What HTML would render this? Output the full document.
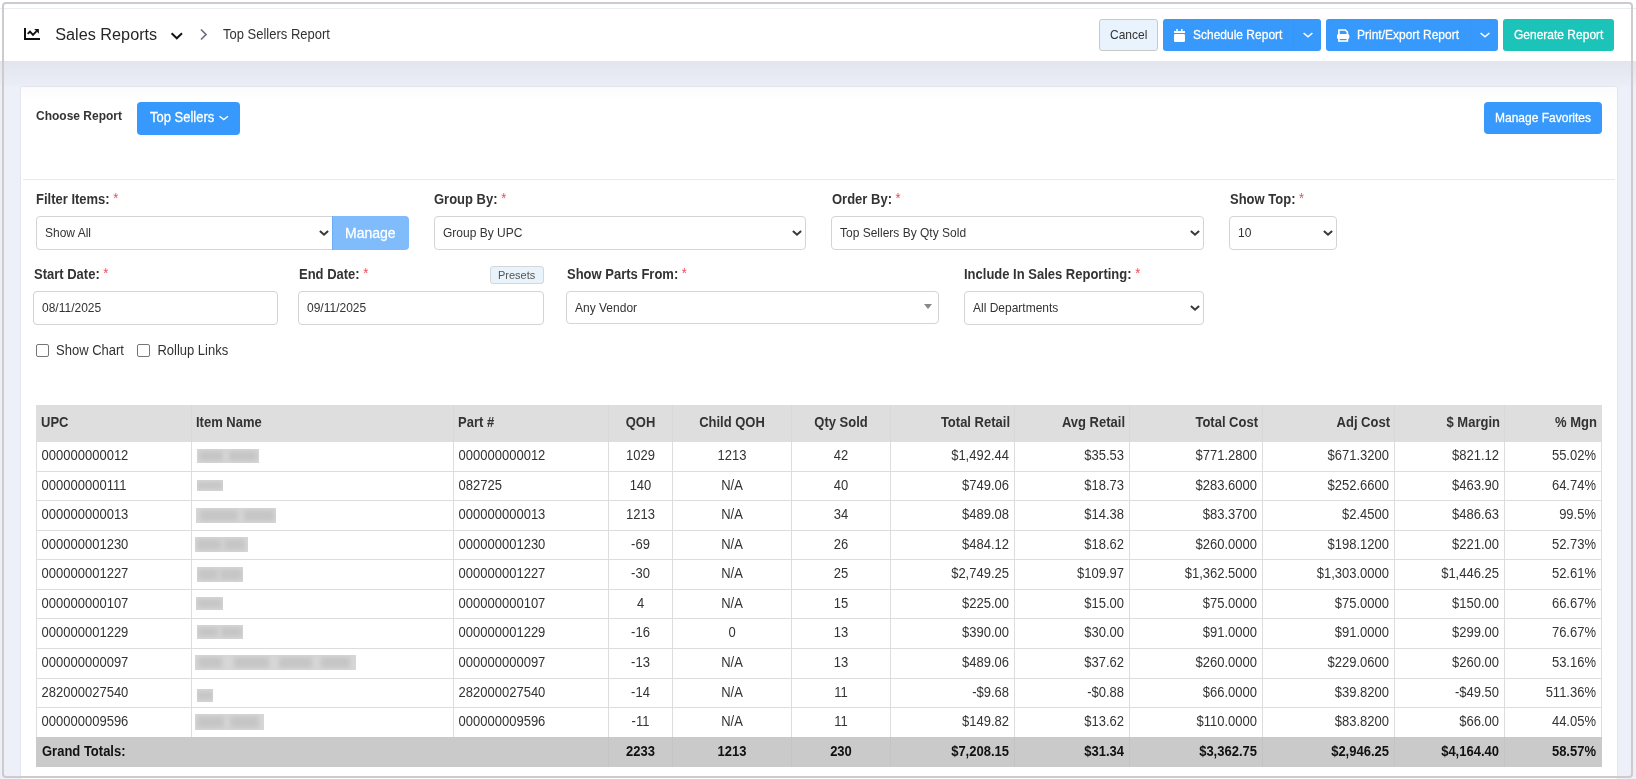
<!DOCTYPE html>
<html><head><meta charset="utf-8">
<style>
*{box-sizing:border-box;margin:0;padding:0}
html,body{width:1636px;height:779px;overflow:hidden}
body{position:relative;background:#EDF0F8;font-family:"Liberation Sans",sans-serif;color:#333}
.r,.t,svg{position:absolute}
.t{white-space:nowrap;line-height:1;transform:scaleY(1.08);transform-origin:0 84.65%}
#root{position:absolute;left:0;top:0;width:1636px;height:779px;overflow:hidden;will-change:transform}
</style></head><body>

<div id="root">
<div class="r" style="left:0px;top:0px;width:1636px;height:61px;background:#fff;"></div>
<div class="r" style="left:0px;top:8px;width:1636px;height:1px;background:#e9eef3;"></div>
<div class="r" style="left:0px;top:61px;width:1636px;height:25px;background:linear-gradient(#e3e5ee,#ebeef6);"></div>
<svg style="left:21px;top:25px" width="22" height="18" viewBox="0 0 22 18">
<rect x="3" y="3" width="2" height="12" fill="#111"/><rect x="3" y="13" width="16" height="2" fill="#111"/>
<path d="M6.7 8.9 L9 6.6 L12 9.8 L15.6 6.2" fill="none" stroke="#111" stroke-width="1.9" stroke-linejoin="miter"/>
<path d="M13.2 4.1 H17.9 V8.7 Z" fill="#111"/>
</svg>
<div class="t" style="left:55.2px;top:26px;font-size:16.25px;color:#262626;transform:scaleY(1.05);">Sales Reports</div>
<svg style="left:170px;top:31px" width="14" height="10" viewBox="0 0 14 10"><path d="M1.6 2.3 L6.8 7.3 L12 2.3" fill="none" stroke="#151515" stroke-width="2"/></svg>
<svg style="left:198px;top:27px" width="12" height="15" viewBox="0 0 12 15"><path d="M3 2.5 L8 7.5 L3 12.5" fill="none" stroke="#6c6e80" stroke-width="1.7"/></svg>
<div class="t" style="left:223px;top:28px;font-size:13px;color:#333;">Top Sellers Report</div>
<div class="r" style="left:1099px;top:19px;width:59px;height:32px;background:#e9f3fd;border:1px solid #c9c9c9;border-radius:3px;"></div>
<div class="t" style="left:1110px;top:29px;font-size:12px;color:#333;">Cancel</div>
<div class="r" style="left:1163px;top:19px;width:158px;height:32px;background:#3699fb;border-radius:3px;"></div>
<div class="r" style="left:1293px;top:19px;width:1px;height:32px;background:#3596f8;"></div>
<svg style="left:1173px;top:28px" width="13" height="15" viewBox="0 0 13 15">
<rect x="1" y="3" width="11" height="2" fill="#fff"/><rect x="1" y="6" width="11" height="8" rx="1.2" fill="#fff"/>
<rect x="3.2" y="1" width="1.6" height="3" fill="#fff"/><rect x="8" y="1" width="1.6" height="3" fill="#fff"/>
</svg>
<div class="t" style="left:1193px;top:29px;font-size:12px;color:#fff;-webkit-text-stroke:0.25px #fff;">Schedule Report</div>
<svg style="left:1302px;top:31px" width="12" height="8" viewBox="0 0 12 8"><path d="M1.6 2 L6 5.8 L10.4 2" fill="none" stroke="#fff" stroke-width="1.6"/></svg>
<div class="r" style="left:1326px;top:19px;width:172px;height:32px;background:#3699fb;border-radius:3px;"></div>
<div class="r" style="left:1470px;top:19px;width:1px;height:32px;background:#3596f8;"></div>
<svg style="left:1336px;top:28px" width="15" height="15" viewBox="0 0 15 15">
<path d="M2.9 6 V2 H9.3 L11.4 4.1 V6" fill="none" stroke="#fff" stroke-width="1.6"/>
<rect x="1" y="6" width="12.3" height="5" rx="1.5" fill="#fff"/>
<rect x="2.9" y="9.6" width="8.5" height="3.4" fill="none" stroke="#fff" stroke-width="1.6"/>
</svg>
<div class="t" style="left:1357px;top:29px;font-size:12px;color:#fff;-webkit-text-stroke:0.25px #fff;">Print/Export Report</div>
<svg style="left:1479px;top:31px" width="12" height="8" viewBox="0 0 12 8"><path d="M1.6 2 L6 5.8 L10.4 2" fill="none" stroke="#fff" stroke-width="1.6"/></svg>
<div class="r" style="left:1503px;top:19px;width:111px;height:32px;background:#1bc3b9;border-radius:3px;"></div>
<div class="t" style="left:1514px;top:29px;font-size:12px;color:#fff;-webkit-text-stroke:0.25px #fff;">Generate Report</div>
<div class="r" style="left:20px;top:86px;width:1598px;height:714px;background:#fff;border:1px solid #e2e5ed;border-radius:3px;"></div>
<div class="r" style="left:21px;top:87px;width:1596px;height:13px;background:linear-gradient(#fbfbfb,#fff);border-radius:3px 3px 0 0;"></div>
<div class="t" style="left:36px;top:110px;font-size:12px;color:#333;font-weight:bold;">Choose Report</div>
<div class="r" style="left:137px;top:102px;width:103px;height:33px;background:#3699fb;border-radius:4px;"></div>
<div class="t" style="left:150px;top:111px;font-size:13px;color:#fff;-webkit-text-stroke:0.25px #fff;">Top Sellers</div>
<svg style="left:218px;top:114px" width="11" height="8" viewBox="0 0 11 8"><path d="M1.5 2.2 L5.8 5.6 L10 2.2" fill="none" stroke="#fff" stroke-width="1.4"/></svg>
<div class="r" style="left:1484px;top:102px;width:118px;height:32px;background:#3699fb;border-radius:4px;"></div>
<div class="t" style="left:1495px;top:112px;font-size:12px;color:#fff;-webkit-text-stroke:0.25px #fff;">Manage Favorites</div>
<div class="r" style="left:23px;top:179px;width:1592px;height:1px;background:#e6e9ee;"></div>
<div class="t" style="left:36px;top:193px;font-size:13px;font-weight:bold;color:#333">Filter Items: <span style="color:#ef4a5c;font-weight:normal;position:relative;top:-1.5px">*</span></div>
<div class="r" style="left:36px;top:216px;width:298px;height:34px;background:#fff;border:1px solid #d4d4d4;border-radius:4px;border-radius:4px 0 0 4px;"></div>
<div class="t" style="left:45px;top:227px;font-size:12px;color:#333;">Show All</div>
<svg style="left:318px;top:227px" width="12" height="10" viewBox="0 0 12 10"><path d="M1.9 4 L6 7.7 L10.1 4" fill="none" stroke="#3a3a3a" stroke-width="2.1"/></svg>
<div class="r" style="left:332px;top:216px;width:77px;height:34px;background:#80bbfb;border-radius:0 4px 4px 0;border-left:1px solid #6cadf5;"></div>
<div class="t" style="left:345px;top:226px;font-size:14px;color:#fff;-webkit-text-stroke:0.25px #fff;">Manage</div>
<div class="t" style="left:434px;top:193px;font-size:13px;font-weight:bold;color:#333">Group By: <span style="color:#ef4a5c;font-weight:normal;position:relative;top:-1.5px">*</span></div>
<div class="r" style="left:434px;top:216px;width:372px;height:34px;background:#fff;border:1px solid #d4d4d4;border-radius:4px;"></div>
<div class="t" style="left:443px;top:227px;font-size:12px;color:#333;">Group By UPC</div>
<svg style="left:791px;top:227px" width="12" height="10" viewBox="0 0 12 10"><path d="M1.9 4 L6 7.7 L10.1 4" fill="none" stroke="#3a3a3a" stroke-width="2.1"/></svg>
<div class="t" style="left:832px;top:193px;font-size:13px;font-weight:bold;color:#333">Order By: <span style="color:#ef4a5c;font-weight:normal;position:relative;top:-1.5px">*</span></div>
<div class="r" style="left:831px;top:216px;width:373px;height:34px;background:#fff;border:1px solid #d4d4d4;border-radius:4px;"></div>
<div class="t" style="left:840px;top:227px;font-size:12px;color:#333;">Top Sellers By Qty Sold</div>
<svg style="left:1189px;top:227px" width="12" height="10" viewBox="0 0 12 10"><path d="M1.9 4 L6 7.7 L10.1 4" fill="none" stroke="#3a3a3a" stroke-width="2.1"/></svg>
<div class="t" style="left:1230px;top:193px;font-size:13px;font-weight:bold;color:#333">Show Top: <span style="color:#ef4a5c;font-weight:normal;position:relative;top:-1.5px">*</span></div>
<div class="r" style="left:1229px;top:216px;width:108px;height:34px;background:#fff;border:1px solid #d4d4d4;border-radius:4px;"></div>
<div class="t" style="left:1238px;top:227px;font-size:12px;color:#333;">10</div>
<svg style="left:1322px;top:227px" width="12" height="10" viewBox="0 0 12 10"><path d="M1.9 4 L6 7.7 L10.1 4" fill="none" stroke="#3a3a3a" stroke-width="2.1"/></svg>
<div class="t" style="left:34px;top:268px;font-size:13px;font-weight:bold;color:#333">Start Date: <span style="color:#ef4a5c;font-weight:normal;position:relative;top:-1.5px">*</span></div>
<div class="r" style="left:33px;top:291px;width:245px;height:34px;background:#fff;border:1px solid #d4d4d4;border-radius:4px;"></div>
<div class="t" style="left:42px;top:302px;font-size:12px;color:#333;">08/11/2025</div>
<div class="t" style="left:299px;top:268px;font-size:13px;font-weight:bold;color:#333">End Date: <span style="color:#ef4a5c;font-weight:normal;position:relative;top:-1.5px">*</span></div>
<div class="r" style="left:490px;top:266px;width:54px;height:18px;background:#e8f3fc;border:1px solid #d6d6d6;border-radius:3px;"></div>
<div class="t" style="left:498px;top:270px;font-size:11px;color:#555;transform:none;">Presets</div>
<div class="r" style="left:298px;top:291px;width:246px;height:34px;background:#fff;border:1px solid #d4d4d4;border-radius:4px;"></div>
<div class="t" style="left:307px;top:302px;font-size:12px;color:#333;">09/11/2025</div>
<div class="t" style="left:567px;top:268px;font-size:13px;font-weight:bold;color:#333">Show Parts From: <span style="color:#ef4a5c;font-weight:normal;position:relative;top:-1.5px">*</span></div>
<div class="r" style="left:566px;top:291px;width:373px;height:33px;background:#fff;border:1px solid #d4d4d4;border-radius:4px;"></div>
<div class="t" style="left:575px;top:302px;font-size:12px;color:#333;">Any Vendor</div>
<svg style="left:923px;top:303px" width="10" height="7" viewBox="0 0 10 7"><path d="M1 1 H9 L5 6 Z" fill="#888"/></svg>
<div class="t" style="left:964px;top:268px;font-size:13px;font-weight:bold;color:#333">Include In Sales Reporting: <span style="color:#ef4a5c;font-weight:normal;position:relative;top:-1.5px">*</span></div>
<div class="r" style="left:964px;top:291px;width:240px;height:34px;background:#fff;border:1px solid #d4d4d4;border-radius:4px;"></div>
<div class="t" style="left:973px;top:302px;font-size:12px;color:#333;">All Departments</div>
<svg style="left:1189px;top:302px" width="12" height="10" viewBox="0 0 12 10"><path d="M1.9 4 L6 7.7 L10.1 4" fill="none" stroke="#3a3a3a" stroke-width="2.1"/></svg>
<div class="r" style="left:36px;top:344px;width:13px;height:13px;background:#fff;border:1px solid #767676;border-radius:2px;"></div>
<div class="t" style="left:56px;top:344px;font-size:13px;color:#333;">Show Chart</div>
<div class="r" style="left:137px;top:344px;width:13px;height:13px;background:#fff;border:1px solid #767676;border-radius:2px;"></div>
<div class="t" style="left:157.4px;top:344px;font-size:13px;color:#333;">Rollup Links</div>
<div class="r" style="left:36px;top:405px;width:1566px;height:37px;background:#dedede;"></div>
<div class="r" style="left:191px;top:405px;width:1px;height:37px;background:#d8d8d8;"></div>
<div class="r" style="left:453px;top:405px;width:1px;height:37px;background:#d8d8d8;"></div>
<div class="r" style="left:608px;top:405px;width:1px;height:37px;background:#d8d8d8;"></div>
<div class="r" style="left:672px;top:405px;width:1px;height:37px;background:#d8d8d8;"></div>
<div class="r" style="left:791px;top:405px;width:1px;height:37px;background:#d8d8d8;"></div>
<div class="r" style="left:890px;top:405px;width:1px;height:37px;background:#d8d8d8;"></div>
<div class="r" style="left:1014px;top:405px;width:1px;height:37px;background:#d8d8d8;"></div>
<div class="r" style="left:1129px;top:405px;width:1px;height:37px;background:#d8d8d8;"></div>
<div class="r" style="left:1262px;top:405px;width:1px;height:37px;background:#d8d8d8;"></div>
<div class="r" style="left:1394px;top:405px;width:1px;height:37px;background:#d8d8d8;"></div>
<div class="r" style="left:1504px;top:405px;width:1px;height:37px;background:#d8d8d8;"></div>
<div class="r" style="left:36px;top:442px;width:1px;height:295px;background:#dddddd;"></div>
<div class="r" style="left:1601px;top:442px;width:1px;height:295px;background:#dddddd;"></div>
<div class="r" style="left:191px;top:442px;width:1px;height:295px;background:#dddddd;"></div>
<div class="r" style="left:453px;top:442px;width:1px;height:295px;background:#dddddd;"></div>
<div class="r" style="left:608px;top:442px;width:1px;height:295px;background:#dddddd;"></div>
<div class="r" style="left:672px;top:442px;width:1px;height:295px;background:#dddddd;"></div>
<div class="r" style="left:791px;top:442px;width:1px;height:295px;background:#dddddd;"></div>
<div class="r" style="left:890px;top:442px;width:1px;height:295px;background:#dddddd;"></div>
<div class="r" style="left:1014px;top:442px;width:1px;height:295px;background:#dddddd;"></div>
<div class="r" style="left:1129px;top:442px;width:1px;height:295px;background:#dddddd;"></div>
<div class="r" style="left:1262px;top:442px;width:1px;height:295px;background:#dddddd;"></div>
<div class="r" style="left:1394px;top:442px;width:1px;height:295px;background:#dddddd;"></div>
<div class="r" style="left:1504px;top:442px;width:1px;height:295px;background:#dddddd;"></div>
<div class="r" style="left:36px;top:471px;width:1566px;height:1px;background:#dddddd;"></div>
<div class="r" style="left:36px;top:500px;width:1566px;height:1px;background:#dddddd;"></div>
<div class="r" style="left:36px;top:530px;width:1566px;height:1px;background:#dddddd;"></div>
<div class="r" style="left:36px;top:559px;width:1566px;height:1px;background:#dddddd;"></div>
<div class="r" style="left:36px;top:589px;width:1566px;height:1px;background:#dddddd;"></div>
<div class="r" style="left:36px;top:618px;width:1566px;height:1px;background:#dddddd;"></div>
<div class="r" style="left:36px;top:648px;width:1566px;height:1px;background:#dddddd;"></div>
<div class="r" style="left:36px;top:678px;width:1566px;height:1px;background:#dddddd;"></div>
<div class="r" style="left:36px;top:707px;width:1566px;height:1px;background:#dddddd;"></div>
<div class="r" style="left:36px;top:737px;width:1566px;height:30px;background:#cacaca;"></div>
<div class="r" style="left:608px;top:737px;width:1px;height:30px;background:#c4c4c4;"></div>
<div class="r" style="left:672px;top:737px;width:1px;height:30px;background:#c4c4c4;"></div>
<div class="r" style="left:791px;top:737px;width:1px;height:30px;background:#c4c4c4;"></div>
<div class="r" style="left:890px;top:737px;width:1px;height:30px;background:#c4c4c4;"></div>
<div class="r" style="left:1014px;top:737px;width:1px;height:30px;background:#c4c4c4;"></div>
<div class="r" style="left:1129px;top:737px;width:1px;height:30px;background:#c4c4c4;"></div>
<div class="r" style="left:1262px;top:737px;width:1px;height:30px;background:#c4c4c4;"></div>
<div class="r" style="left:1394px;top:737px;width:1px;height:30px;background:#c4c4c4;"></div>
<div class="r" style="left:1504px;top:737px;width:1px;height:30px;background:#c4c4c4;"></div>
<div class="t" style="left:41px;top:416px;font-size:13px;color:#333;font-weight:bold;">UPC</div>
<div class="t" style="left:196px;top:416px;font-size:13px;color:#333;font-weight:bold;">Item Name</div>
<div class="t" style="left:458px;top:416px;font-size:13px;color:#333;font-weight:bold;">Part #</div>
<div class="t" style="left:440.5px;width:400px;text-align:center;top:416px;font-size:13px;color:#333;font-weight:bold;">QOH</div>
<div class="t" style="left:532.0px;width:400px;text-align:center;top:416px;font-size:13px;color:#333;font-weight:bold;">Child QOH</div>
<div class="t" style="left:641.0px;width:400px;text-align:center;top:416px;font-size:13px;color:#333;font-weight:bold;">Qty Sold</div>
<div class="t" style="left:610px;width:400px;text-align:right;top:416px;font-size:13px;color:#333;font-weight:bold;">Total Retail</div>
<div class="t" style="left:725px;width:400px;text-align:right;top:416px;font-size:13px;color:#333;font-weight:bold;">Avg Retail</div>
<div class="t" style="left:858px;width:400px;text-align:right;top:416px;font-size:13px;color:#333;font-weight:bold;">Total Cost</div>
<div class="t" style="left:990px;width:400px;text-align:right;top:416px;font-size:13px;color:#333;font-weight:bold;">Adj Cost</div>
<div class="t" style="left:1100px;width:400px;text-align:right;top:416px;font-size:13px;color:#333;font-weight:bold;">$ Margin</div>
<div class="t" style="left:1197px;width:400px;text-align:right;top:416px;font-size:13px;color:#333;font-weight:bold;">% Mgn</div>
<div class="t" style="left:41.6px;top:448.5px;font-size:13px;color:#333;">000000000012</div>
<div class="t" style="left:458.6px;top:448.5px;font-size:13px;color:#333;">000000000012</div>
<div class="t" style="left:440.5px;width:400px;text-align:center;top:448.5px;font-size:13px;color:#333;">1029</div>
<div class="t" style="left:532.0px;width:400px;text-align:center;top:448.5px;font-size:13px;color:#333;">1213</div>
<div class="t" style="left:641.0px;width:400px;text-align:center;top:448.5px;font-size:13px;color:#333;">42</div>
<div class="t" style="left:609px;width:400px;text-align:right;top:448.5px;font-size:13px;color:#333;">$1,492.44</div>
<div class="t" style="left:724px;width:400px;text-align:right;top:448.5px;font-size:13px;color:#333;">$35.53</div>
<div class="t" style="left:857px;width:400px;text-align:right;top:448.5px;font-size:13px;color:#333;">$771.2800</div>
<div class="t" style="left:989px;width:400px;text-align:right;top:448.5px;font-size:13px;color:#333;">$671.3200</div>
<div class="t" style="left:1099px;width:400px;text-align:right;top:448.5px;font-size:13px;color:#333;">$821.12</div>
<div class="t" style="left:1196px;width:400px;text-align:right;top:448.5px;font-size:13px;color:#333;">55.02%</div>
<div class="t" style="left:41.6px;top:478.5px;font-size:13px;color:#333;">000000000111</div>
<div class="t" style="left:458.6px;top:478.5px;font-size:13px;color:#333;">082725</div>
<div class="t" style="left:440.5px;width:400px;text-align:center;top:478.5px;font-size:13px;color:#333;">140</div>
<div class="t" style="left:532.0px;width:400px;text-align:center;top:478.5px;font-size:13px;color:#333;">N/A</div>
<div class="t" style="left:641.0px;width:400px;text-align:center;top:478.5px;font-size:13px;color:#333;">40</div>
<div class="t" style="left:609px;width:400px;text-align:right;top:478.5px;font-size:13px;color:#333;">$749.06</div>
<div class="t" style="left:724px;width:400px;text-align:right;top:478.5px;font-size:13px;color:#333;">$18.73</div>
<div class="t" style="left:857px;width:400px;text-align:right;top:478.5px;font-size:13px;color:#333;">$283.6000</div>
<div class="t" style="left:989px;width:400px;text-align:right;top:478.5px;font-size:13px;color:#333;">$252.6600</div>
<div class="t" style="left:1099px;width:400px;text-align:right;top:478.5px;font-size:13px;color:#333;">$463.90</div>
<div class="t" style="left:1196px;width:400px;text-align:right;top:478.5px;font-size:13px;color:#333;">64.74%</div>
<div class="t" style="left:41.6px;top:507.5px;font-size:13px;color:#333;">000000000013</div>
<div class="t" style="left:458.6px;top:507.5px;font-size:13px;color:#333;">000000000013</div>
<div class="t" style="left:440.5px;width:400px;text-align:center;top:507.5px;font-size:13px;color:#333;">1213</div>
<div class="t" style="left:532.0px;width:400px;text-align:center;top:507.5px;font-size:13px;color:#333;">N/A</div>
<div class="t" style="left:641.0px;width:400px;text-align:center;top:507.5px;font-size:13px;color:#333;">34</div>
<div class="t" style="left:609px;width:400px;text-align:right;top:507.5px;font-size:13px;color:#333;">$489.08</div>
<div class="t" style="left:724px;width:400px;text-align:right;top:507.5px;font-size:13px;color:#333;">$14.38</div>
<div class="t" style="left:857px;width:400px;text-align:right;top:507.5px;font-size:13px;color:#333;">$83.3700</div>
<div class="t" style="left:989px;width:400px;text-align:right;top:507.5px;font-size:13px;color:#333;">$2.4500</div>
<div class="t" style="left:1099px;width:400px;text-align:right;top:507.5px;font-size:13px;color:#333;">$486.63</div>
<div class="t" style="left:1196px;width:400px;text-align:right;top:507.5px;font-size:13px;color:#333;">99.5%</div>
<div class="t" style="left:41.6px;top:537.5px;font-size:13px;color:#333;">000000001230</div>
<div class="t" style="left:458.6px;top:537.5px;font-size:13px;color:#333;">000000001230</div>
<div class="t" style="left:440.5px;width:400px;text-align:center;top:537.5px;font-size:13px;color:#333;">-69</div>
<div class="t" style="left:532.0px;width:400px;text-align:center;top:537.5px;font-size:13px;color:#333;">N/A</div>
<div class="t" style="left:641.0px;width:400px;text-align:center;top:537.5px;font-size:13px;color:#333;">26</div>
<div class="t" style="left:609px;width:400px;text-align:right;top:537.5px;font-size:13px;color:#333;">$484.12</div>
<div class="t" style="left:724px;width:400px;text-align:right;top:537.5px;font-size:13px;color:#333;">$18.62</div>
<div class="t" style="left:857px;width:400px;text-align:right;top:537.5px;font-size:13px;color:#333;">$260.0000</div>
<div class="t" style="left:989px;width:400px;text-align:right;top:537.5px;font-size:13px;color:#333;">$198.1200</div>
<div class="t" style="left:1099px;width:400px;text-align:right;top:537.5px;font-size:13px;color:#333;">$221.00</div>
<div class="t" style="left:1196px;width:400px;text-align:right;top:537.5px;font-size:13px;color:#333;">52.73%</div>
<div class="t" style="left:41.6px;top:566.5px;font-size:13px;color:#333;">000000001227</div>
<div class="t" style="left:458.6px;top:566.5px;font-size:13px;color:#333;">000000001227</div>
<div class="t" style="left:440.5px;width:400px;text-align:center;top:566.5px;font-size:13px;color:#333;">-30</div>
<div class="t" style="left:532.0px;width:400px;text-align:center;top:566.5px;font-size:13px;color:#333;">N/A</div>
<div class="t" style="left:641.0px;width:400px;text-align:center;top:566.5px;font-size:13px;color:#333;">25</div>
<div class="t" style="left:609px;width:400px;text-align:right;top:566.5px;font-size:13px;color:#333;">$2,749.25</div>
<div class="t" style="left:724px;width:400px;text-align:right;top:566.5px;font-size:13px;color:#333;">$109.97</div>
<div class="t" style="left:857px;width:400px;text-align:right;top:566.5px;font-size:13px;color:#333;">$1,362.5000</div>
<div class="t" style="left:989px;width:400px;text-align:right;top:566.5px;font-size:13px;color:#333;">$1,303.0000</div>
<div class="t" style="left:1099px;width:400px;text-align:right;top:566.5px;font-size:13px;color:#333;">$1,446.25</div>
<div class="t" style="left:1196px;width:400px;text-align:right;top:566.5px;font-size:13px;color:#333;">52.61%</div>
<div class="t" style="left:41.6px;top:596.5px;font-size:13px;color:#333;">000000000107</div>
<div class="t" style="left:458.6px;top:596.5px;font-size:13px;color:#333;">000000000107</div>
<div class="t" style="left:440.5px;width:400px;text-align:center;top:596.5px;font-size:13px;color:#333;">4</div>
<div class="t" style="left:532.0px;width:400px;text-align:center;top:596.5px;font-size:13px;color:#333;">N/A</div>
<div class="t" style="left:641.0px;width:400px;text-align:center;top:596.5px;font-size:13px;color:#333;">15</div>
<div class="t" style="left:609px;width:400px;text-align:right;top:596.5px;font-size:13px;color:#333;">$225.00</div>
<div class="t" style="left:724px;width:400px;text-align:right;top:596.5px;font-size:13px;color:#333;">$15.00</div>
<div class="t" style="left:857px;width:400px;text-align:right;top:596.5px;font-size:13px;color:#333;">$75.0000</div>
<div class="t" style="left:989px;width:400px;text-align:right;top:596.5px;font-size:13px;color:#333;">$75.0000</div>
<div class="t" style="left:1099px;width:400px;text-align:right;top:596.5px;font-size:13px;color:#333;">$150.00</div>
<div class="t" style="left:1196px;width:400px;text-align:right;top:596.5px;font-size:13px;color:#333;">66.67%</div>
<div class="t" style="left:41.6px;top:625.5px;font-size:13px;color:#333;">000000001229</div>
<div class="t" style="left:458.6px;top:625.5px;font-size:13px;color:#333;">000000001229</div>
<div class="t" style="left:440.5px;width:400px;text-align:center;top:625.5px;font-size:13px;color:#333;">-16</div>
<div class="t" style="left:532.0px;width:400px;text-align:center;top:625.5px;font-size:13px;color:#333;">0</div>
<div class="t" style="left:641.0px;width:400px;text-align:center;top:625.5px;font-size:13px;color:#333;">13</div>
<div class="t" style="left:609px;width:400px;text-align:right;top:625.5px;font-size:13px;color:#333;">$390.00</div>
<div class="t" style="left:724px;width:400px;text-align:right;top:625.5px;font-size:13px;color:#333;">$30.00</div>
<div class="t" style="left:857px;width:400px;text-align:right;top:625.5px;font-size:13px;color:#333;">$91.0000</div>
<div class="t" style="left:989px;width:400px;text-align:right;top:625.5px;font-size:13px;color:#333;">$91.0000</div>
<div class="t" style="left:1099px;width:400px;text-align:right;top:625.5px;font-size:13px;color:#333;">$299.00</div>
<div class="t" style="left:1196px;width:400px;text-align:right;top:625.5px;font-size:13px;color:#333;">76.67%</div>
<div class="t" style="left:41.6px;top:655.5px;font-size:13px;color:#333;">000000000097</div>
<div class="t" style="left:458.6px;top:655.5px;font-size:13px;color:#333;">000000000097</div>
<div class="t" style="left:440.5px;width:400px;text-align:center;top:655.5px;font-size:13px;color:#333;">-13</div>
<div class="t" style="left:532.0px;width:400px;text-align:center;top:655.5px;font-size:13px;color:#333;">N/A</div>
<div class="t" style="left:641.0px;width:400px;text-align:center;top:655.5px;font-size:13px;color:#333;">13</div>
<div class="t" style="left:609px;width:400px;text-align:right;top:655.5px;font-size:13px;color:#333;">$489.06</div>
<div class="t" style="left:724px;width:400px;text-align:right;top:655.5px;font-size:13px;color:#333;">$37.62</div>
<div class="t" style="left:857px;width:400px;text-align:right;top:655.5px;font-size:13px;color:#333;">$260.0000</div>
<div class="t" style="left:989px;width:400px;text-align:right;top:655.5px;font-size:13px;color:#333;">$229.0600</div>
<div class="t" style="left:1099px;width:400px;text-align:right;top:655.5px;font-size:13px;color:#333;">$260.00</div>
<div class="t" style="left:1196px;width:400px;text-align:right;top:655.5px;font-size:13px;color:#333;">53.16%</div>
<div class="t" style="left:41.6px;top:685.5px;font-size:13px;color:#333;">282000027540</div>
<div class="t" style="left:458.6px;top:685.5px;font-size:13px;color:#333;">282000027540</div>
<div class="t" style="left:440.5px;width:400px;text-align:center;top:685.5px;font-size:13px;color:#333;">-14</div>
<div class="t" style="left:532.0px;width:400px;text-align:center;top:685.5px;font-size:13px;color:#333;">N/A</div>
<div class="t" style="left:641.0px;width:400px;text-align:center;top:685.5px;font-size:13px;color:#333;">11</div>
<div class="t" style="left:609px;width:400px;text-align:right;top:685.5px;font-size:13px;color:#333;">-$9.68</div>
<div class="t" style="left:724px;width:400px;text-align:right;top:685.5px;font-size:13px;color:#333;">-$0.88</div>
<div class="t" style="left:857px;width:400px;text-align:right;top:685.5px;font-size:13px;color:#333;">$66.0000</div>
<div class="t" style="left:989px;width:400px;text-align:right;top:685.5px;font-size:13px;color:#333;">$39.8200</div>
<div class="t" style="left:1099px;width:400px;text-align:right;top:685.5px;font-size:13px;color:#333;">-$49.50</div>
<div class="t" style="left:1196px;width:400px;text-align:right;top:685.5px;font-size:13px;color:#333;">511.36%</div>
<div class="t" style="left:41.6px;top:714.5px;font-size:13px;color:#333;">000000009596</div>
<div class="t" style="left:458.6px;top:714.5px;font-size:13px;color:#333;">000000009596</div>
<div class="t" style="left:440.5px;width:400px;text-align:center;top:714.5px;font-size:13px;color:#333;">-11</div>
<div class="t" style="left:532.0px;width:400px;text-align:center;top:714.5px;font-size:13px;color:#333;">N/A</div>
<div class="t" style="left:641.0px;width:400px;text-align:center;top:714.5px;font-size:13px;color:#333;">11</div>
<div class="t" style="left:609px;width:400px;text-align:right;top:714.5px;font-size:13px;color:#333;">$149.82</div>
<div class="t" style="left:724px;width:400px;text-align:right;top:714.5px;font-size:13px;color:#333;">$13.62</div>
<div class="t" style="left:857px;width:400px;text-align:right;top:714.5px;font-size:13px;color:#333;">$110.0000</div>
<div class="t" style="left:989px;width:400px;text-align:right;top:714.5px;font-size:13px;color:#333;">$83.8200</div>
<div class="t" style="left:1099px;width:400px;text-align:right;top:714.5px;font-size:13px;color:#333;">$66.00</div>
<div class="t" style="left:1196px;width:400px;text-align:right;top:714.5px;font-size:13px;color:#333;">44.05%</div>
<div class="r" style="left:197px;top:449px;width:62px;height:14px;background:#d7d7d7;overflow:hidden"><div style="position:absolute;left:1.9px;top:2.1px;width:24.2px;height:9.8px;background:#c5c5c5;filter:blur(2.5px)"></div><div style="position:absolute;left:32.2px;top:2.1px;width:27.9px;height:9.8px;background:#c5c5c5;filter:blur(2.5px)"></div></div>
<div class="r" style="left:197px;top:480px;width:26px;height:11px;background:#d7d7d7;overflow:hidden"><div style="position:absolute;left:0.0px;top:1.6px;width:26.0px;height:7.7px;background:#c5c5c5;filter:blur(2.5px)"></div></div>
<div class="r" style="left:196px;top:508px;width:80px;height:15px;background:#d7d7d7;overflow:hidden"><div style="position:absolute;left:4.0px;top:2.2px;width:37.6px;height:10.5px;background:#c5c5c5;filter:blur(2.5px)"></div><div style="position:absolute;left:48.0px;top:2.2px;width:29.6px;height:10.5px;background:#c5c5c5;filter:blur(2.5px)"></div></div>
<div class="r" style="left:195px;top:537px;width:53px;height:15px;background:#d7d7d7;overflow:hidden"><div style="position:absolute;left:1.6px;top:2.2px;width:24.9px;height:10.5px;background:#c5c5c5;filter:blur(2.5px)"></div><div style="position:absolute;left:29.2px;top:2.2px;width:21.2px;height:10.5px;background:#c5c5c5;filter:blur(2.5px)"></div></div>
<div class="r" style="left:197px;top:567px;width:46px;height:15px;background:#d7d7d7;overflow:hidden"><div style="position:absolute;left:1.4px;top:2.2px;width:19.3px;height:10.5px;background:#c5c5c5;filter:blur(2.5px)"></div><div style="position:absolute;left:23.0px;top:2.2px;width:21.6px;height:10.5px;background:#c5c5c5;filter:blur(2.5px)"></div></div>
<div class="r" style="left:196px;top:597px;width:27px;height:13px;background:#d7d7d7;overflow:hidden"><div style="position:absolute;left:1.4px;top:1.9px;width:24.3px;height:9.1px;background:#c5c5c5;filter:blur(2.5px)"></div></div>
<div class="r" style="left:197px;top:625px;width:46px;height:14px;background:#d7d7d7;overflow:hidden"><div style="position:absolute;left:1.4px;top:2.1px;width:19.3px;height:9.8px;background:#c5c5c5;filter:blur(2.5px)"></div><div style="position:absolute;left:23.9px;top:2.1px;width:20.7px;height:9.8px;background:#c5c5c5;filter:blur(2.5px)"></div></div>
<div class="r" style="left:195px;top:655px;width:161px;height:15px;background:#d7d7d7;overflow:hidden"><div style="position:absolute;left:3.2px;top:2.2px;width:24.2px;height:10.5px;background:#c5c5c5;filter:blur(2.5px)"></div><div style="position:absolute;left:38.6px;top:2.2px;width:35.4px;height:10.5px;background:#c5c5c5;filter:blur(2.5px)"></div><div style="position:absolute;left:83.7px;top:2.2px;width:33.8px;height:10.5px;background:#c5c5c5;filter:blur(2.5px)"></div><div style="position:absolute;left:125.6px;top:2.2px;width:29.0px;height:10.5px;background:#c5c5c5;filter:blur(2.5px)"></div></div>
<div class="r" style="left:197px;top:689px;width:16px;height:13px;background:#d7d7d7;overflow:hidden"><div style="position:absolute;left:0.0px;top:1.9px;width:16.0px;height:9.1px;background:#c5c5c5;filter:blur(2.5px)"></div></div>
<div class="r" style="left:195px;top:714px;width:69px;height:16px;background:#d7d7d7;overflow:hidden"><div style="position:absolute;left:2.1px;top:2.4px;width:26.9px;height:11.2px;background:#c5c5c5;filter:blur(2.5px)"></div><div style="position:absolute;left:34.5px;top:2.4px;width:29.0px;height:11.2px;background:#c5c5c5;filter:blur(2.5px)"></div></div>
<div class="t" style="left:42px;top:745px;font-size:13px;color:#111;font-weight:bold;">Grand Totals:</div>
<div class="t" style="left:440.5px;width:400px;text-align:center;top:745px;font-size:13px;color:#111;font-weight:bold;">2233</div>
<div class="t" style="left:532.0px;width:400px;text-align:center;top:745px;font-size:13px;color:#111;font-weight:bold;">1213</div>
<div class="t" style="left:641.0px;width:400px;text-align:center;top:745px;font-size:13px;color:#111;font-weight:bold;">230</div>
<div class="t" style="left:609px;width:400px;text-align:right;top:745px;font-size:13px;color:#111;font-weight:bold;">$7,208.15</div>
<div class="t" style="left:724px;width:400px;text-align:right;top:745px;font-size:13px;color:#111;font-weight:bold;">$31.34</div>
<div class="t" style="left:857px;width:400px;text-align:right;top:745px;font-size:13px;color:#111;font-weight:bold;">$3,362.75</div>
<div class="t" style="left:989px;width:400px;text-align:right;top:745px;font-size:13px;color:#111;font-weight:bold;">$2,946.25</div>
<div class="t" style="left:1099px;width:400px;text-align:right;top:745px;font-size:13px;color:#111;font-weight:bold;">$4,164.40</div>
<div class="t" style="left:1196px;width:400px;text-align:right;top:745px;font-size:13px;color:#111;font-weight:bold;">58.57%</div>
<div class="r" style="left:2px;top:2px;width:1631px;height:776px;border:2px solid #cdcbcc;border-radius:4px;"></div>
</div></body></html>
